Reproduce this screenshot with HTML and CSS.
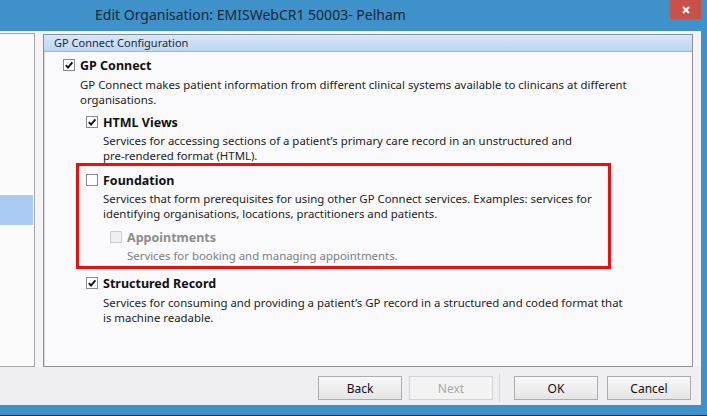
FILE: index.html
```html
<!DOCTYPE html>
<html lang="en">
<head>
  <meta charset="UTF-8" />
  <title>Edit Organisation</title>
  <link rel="stylesheet" href="styles.css">
</head>
<body>
  <div class="window">
    <div class="titlebar">
      <span class="title">Edit Organisation: EMISWebCR1 50003- Pelham</span>
      <span class="close">
        <svg width="10" height="10" viewBox="0 0 10 10"><path d="M2 2 L8 8 M8 2 L2 8" stroke="#fff" stroke-width="2"/></svg>
      </span>
    </div>

    <div class="client">
      <div class="main">
        <div class="nav"><div class="nav-sel"></div></div>

        <div class="group">
          <div class="group-head">GP Connect Configuration</div>
          <div class="group-body">

            <div class="item">
              <div class="head"><span class="cb checked"><svg viewBox="0 0 10 10"><path d="M1.8 5.2 L4 7.5 L8.4 2.3" /></svg></span><b>GP Connect</b></div>
              <div class="desc gp-desc">GP Connect makes patient information from different clinical systems available to clinicans at different<br>organisations.</div>

              <div class="children">
                <div class="item html-item">
                  <div class="head"><span class="cb checked"><svg viewBox="0 0 10 10"><path d="M1.8 5.2 L4 7.5 L8.4 2.3" /></svg></span><b>HTML Views</b></div>
                  <div class="desc">Services for accessing sections of a patient’s primary care record in an unstructured and<br>pre-rendered format (HTML).</div>
                </div>

                <div class="highlight">
                  <div class="item">
                    <div class="head"><span class="cb"></span><b>Foundation</b></div>
                    <div class="desc">Services that form prerequisites for using other GP Connect services. Examples: services for<br>identifying organisations, locations, practitioners and patients.</div>
                    <div class="children">
                      <div class="item disabled appt-item">
                        <div class="head"><span class="cb"></span><b>Appointments</b></div>
                        <div class="desc">Services for booking and managing appointments.</div>
                      </div>
                    </div>
                  </div>
                </div>

                <div class="item structured-item">
                  <div class="head"><span class="cb checked"><svg viewBox="0 0 10 10"><path d="M1.8 5.2 L4 7.5 L8.4 2.3" /></svg></span><b>Structured Record</b></div>
                  <div class="desc">Services for consuming and providing a patient’s GP record in a structured and coded format that<br>is machine readable.</div>
                </div>
              </div>
            </div>

          </div>
        </div>
      </div>

      <div class="footer">
        <button class="btn back">Back</button>
        <button class="btn" disabled>Next</button>
        <span class="sep"></span>
        <button class="btn ok">OK</button>
        <button class="btn">Cancel</button>
      </div>
    </div>
  </div>
</body>
</html>
```

FILE: styles.css
```css
body {
  margin: 0;
  font-family: "Noto Sans", "Open Sans", sans-serif;
  background: #3f92c9;
}

.window {
  width: 707px;
  height: 416px;
  box-sizing: border-box;
  background: #3f92c9;
  border-bottom: 1px solid #0d1a24;
  display: flex;
  flex-direction: column;
}

.titlebar {
  height: 31px;
  display: flex;
  align-items: flex-start;
}

.title {
  padding-left: 95px;
  line-height: 30px;
  font-size: 14px;
  color: #1b2735;
}

.close {
  margin-left: auto;
  margin-right: 6px;
  width: 31px;
  height: 19px;
  background: #c9514a;
  display: flex;
  align-items: center;
  justify-content: center;
}

.client {
  height: 374px;
  margin-right: 6px;
  background: #f4f4f6;
  display: flex;
  flex-direction: column;
}

.main {
  height: 336px;
  display: flex;
}

.nav {
  width: 35px;
  box-sizing: border-box;
  margin-top: 2px;
  background: #fbfbfc;
  border: 1px solid #a6a6a8;
  border-left: none;
}

.nav-sel {
  margin-top: 161px;
  width: 33px;
  height: 30px;
  background: #a9cbf4;
}

.group {
  width: 650px;
  box-sizing: border-box;
  margin-top: 3px;
  margin-left: 8px;
  background: #fafafc;
  border: 1px solid #8d8f92;
  box-shadow: inset 1px 0 0 #d8d8da;
}

.group-head {
  height: 16px;
  line-height: 16px;
  padding-left: 10px;
  font-size: 11px;
  color: #1d2a3a;
  background: linear-gradient(#d6e7f9, #bcd6f1);
  border-bottom: 1px solid #9fb6cc;
}

.group-body {
  padding: 3px 0 0 19px;
  font-size: 11.4px;
  color: #222;
}

.head {
  height: 20px;
  display: flex;
  align-items: center;
  gap: 5px;
}

.head b {
  font-size: 12.5px;
  font-weight: 700;
  color: #111;
}

.cb {
  width: 12px;
  height: 12px;
  box-sizing: border-box;
  border: 1px solid #8a8a8a;
  background: #fff;
  display: flex;
}

.cb svg {
  width: 10px;
  height: 10px;
  fill: none;
  stroke: #111;
  stroke-width: 1.9;
}

.desc {
  margin-top: 2px;
  padding-left: 17px;
  line-height: 15px;
  white-space: nowrap;
}

.children {
  margin-left: 23px;
}

.html-item {
  margin-top: 5px;
}

.html-item .desc {
  margin-top: 1px;
}

.highlight {
  width: 535px;
  box-sizing: border-box;
  margin-left: -10px;
  padding: 4px 0 3px 7px;
  border: 3px solid #f20d0d;
}

.highlight .desc {
  margin-top: 1px;
}

.highlight .children {
  margin-left: 24px;
}

.appt-item {
  margin-top: 6px;
}

.disabled .cb {
  border-color: #cacaca;
  background: #efeff1;
}

.disabled .head b {
  color: #8c8c8c;
}

.disabled .desc {
  color: #7c7c7c;
}

.structured-item {
  margin-top: 4px;
}

.footer {
  height: 38px;
  box-sizing: border-box;
  padding: 9px 10px 0 0;
  background: #efeff1;
  display: flex;
  justify-content: flex-end;
  align-items: flex-start;
}

.btn {
  width: 84px;
  height: 24px;
  font-family: "Noto Sans", sans-serif;
  font-size: 12px;
  color: #111;
  background: linear-gradient(#f7f7f7, #e5e5e5);
  border: 1px solid #acacac;
  border-radius: 0;
  padding: 0;
}

.btn:disabled {
  color: #a8a8a8;
  background: #f3f3f4;
  border-color: #d2d2d4;
}

.back {
  margin-right: 7px;
}

.sep {
  width: 1px;
  height: 28px;
  margin: -2px 14px 0 6px;
  background: #d4d4d6;
}

.ok {
  margin-right: 9px;
}
```
